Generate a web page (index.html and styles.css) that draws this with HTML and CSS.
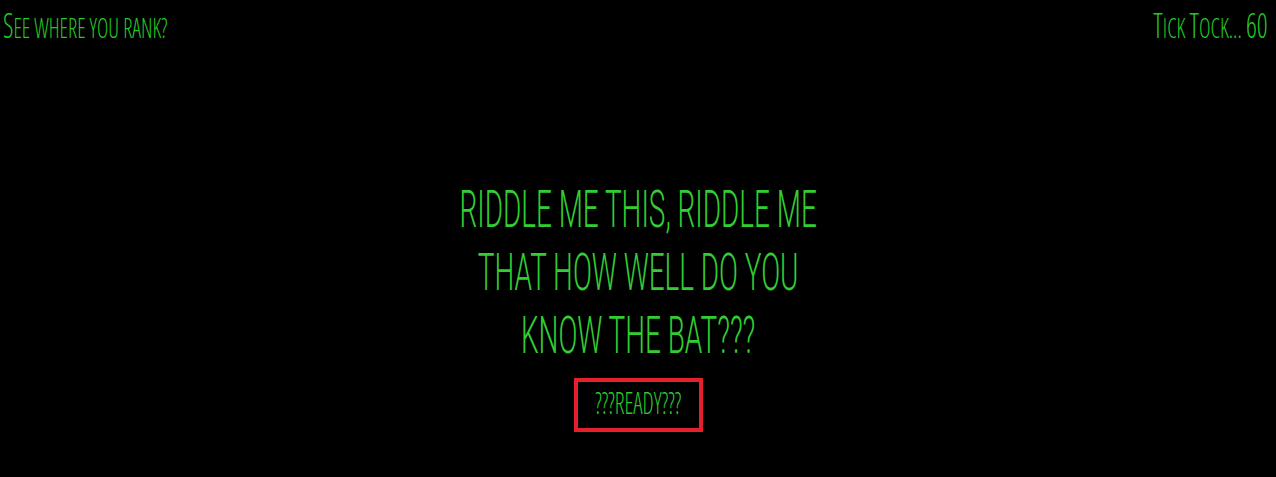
FILE: index.html
```html
<!DOCTYPE html>
<html lang="en">
<head>
<meta charset="utf-8">
<title>Riddle Me This</title>
<link rel="stylesheet" href="styles.css">
</head>
<body>
<header class="topbar">
  <a class="rank-link" href="#"><span class="squeeze squeeze-left"><span class="cap">S</span><span class="sc">ee where you rank?</span></span></a>
  <div class="timer"><span class="squeeze squeeze-right"><span class="cap">T</span><span class="sc">ick </span><span class="cap">T</span><span class="sc">ock... </span><span class="cap">60</span></span></div>
</header>
<main class="intro">
  <h1 class="riddle">
    <span class="riddle-line">RIDDLE ME THIS, RIDDLE ME</span>
    <span class="riddle-line">THAT HOW WELL DO YOU</span>
    <span class="riddle-line">KNOW THE BAT???</span>
  </h1>
  <button class="ready-btn" type="button"><span class="squeeze">???READY???</span></button>
</main>
</body>
</html>
```
FILE: styles.css
```css
html, body {
  margin: 0;
  padding: 0;
  background: #000;
}

body {
  color: #32cd32;
  font-family: "Open Sans", "Liberation Sans", sans-serif;
  font-weight: 300;
  font-stretch: 75%;
  overflow: hidden;
}

.topbar {
  display: flex;
  justify-content: space-between;
  align-items: flex-start;
  padding: 5px 8px 0 3px;
  font-size: 34px;
  line-height: 40px;
}

.cap {
  font-size: 34px;
}

.sc {
  font-size: 28px;
  text-transform: uppercase;
}

.rank-link {
  color: #25c925;
  text-decoration: none;
}

.timer {
  color: #25c925;
}

.squeeze {
  display: inline-block;
  transform: scaleX(0.74);
  transform-origin: center;
  white-space: nowrap;
}

.squeeze-left {
  transform: scaleX(0.77);
  transform-origin: left center;
}

.squeeze-right {
  transform: scaleX(0.785);
  transform-origin: right center;
}

.intro {
  display: flex;
  flex-direction: column;
  align-items: center;
  padding-top: 131px;
}

.riddle {
  margin: 0;
  font-family: Roboto, "Open Sans", sans-serif;
  font-weight: 300;
  font-stretch: 100%;
  font-size: 52.7px;
  line-height: 63px;
  text-align: center;
  transform: scaleX(0.53);
  transform-origin: center;
}

.riddle-line {
  display: block;
  white-space: nowrap;
}

.ready-btn {
  margin-top: 11px;
  width: 129px;
  height: 54px;
  box-sizing: border-box;
  border: 4px solid #e5202d;
  background: #000;
  color: #2bc92b;
  font-family: inherit;
  font-weight: 300;
  font-stretch: 75%;
  font-size: 31px;
  line-height: 30px;
  padding: 0 0 6px;
  display: flex;
  justify-content: center;
  align-items: center;
  cursor: pointer;
}
```
